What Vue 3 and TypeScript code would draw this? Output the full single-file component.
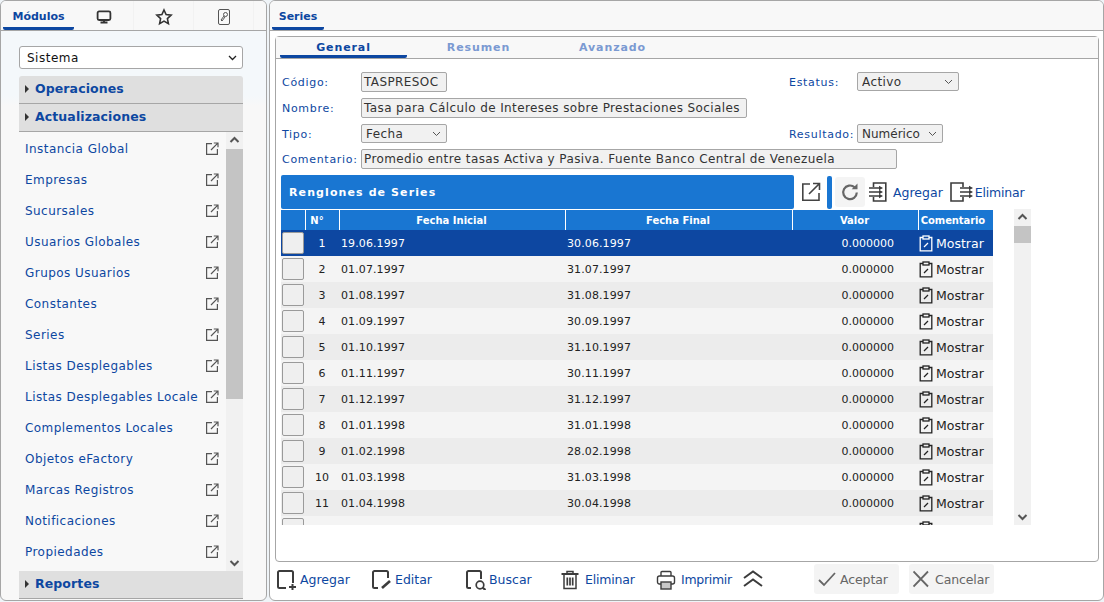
<script setup lang="ts">
const modules = [
  'Instancia Global', 'Empresas', 'Sucursales', 'Usuarios Globales', 'Grupos Usuarios',
  'Constantes', 'Series', 'Listas Desplegables', 'Listas Desplegables Locale',
  'Complementos Locales', 'Objetos eFactory', 'Marcas Registros', 'Notificaciones', 'Propiedades',
]

const rows = [
  ['19.06.1997', '30.06.1997'], ['01.07.1997', '31.07.1997'], ['01.08.1997', '31.08.1997'],
  ['01.09.1997', '30.09.1997'], ['01.10.1997', '31.10.1997'], ['01.11.1997', '30.11.1997'],
  ['01.12.1997', '31.12.1997'], ['01.01.1998', '31.01.1998'], ['01.02.1998', '28.02.1998'],
  ['01.03.1998', '31.03.1998'], ['01.04.1998', '30.04.1998'], ['', ''],
]
</script>

<template>
  <div class="page">
    <aside class="panel left">
      <div class="tabs">
        <div class="tab active">Módulos</div>
        <div class="tab">
          <svg width="16" height="16" viewBox="0 0 16 16" fill="none" stroke="#333" stroke-width="1.800"><rect x="1.600" y="2.400" width="12.800" height="8.600" rx="1.500" /><path d="M4.500 13.500h7M8 11v2" /></svg>
        </div>
        <div class="tab">
          <svg width="18" height="18" viewBox="0 0 18 18" fill="none" stroke="#333" stroke-width="1.600"><path d="M9 2l2.100 4.600 5 .6-3.700 3.400 1 5L9 13.100l-4.400 2.500 1-5L1.900 7.200l5-.6z" /></svg>
        </div>
        <div class="tab">
          <svg width="14" height="18" viewBox="0 0 14 18" fill="none" stroke="#555" stroke-width="1"><rect x="1.500" y="1.500" width="11" height="15" rx="1.500" /><circle cx="8.500" cy="6.500" r="2" /><path d="M7 8l-3 4 1 1 3-4" /></svg>
        </div>
      </div>

      <div class="left-body">
        <div class="sel-wrap module-wrap">
          <select class="sel module-select"><option>Sistema</option></select>
          <svg class="chev" width="9" height="6" viewBox="0 0 9 6" fill="none" stroke="#222" stroke-width="1.300"><path d="M1 1l3.500 3.500L8 1" /></svg>
        </div>
        <div class="group first"><span class="caret"></span>Operaciones</div>
        <div class="group"><span class="caret"></span>Actualizaciones</div>
        <div class="module-list">
          <ul>
            <li v-for="m in modules" :key="m">
              <span class="module-name">{{ m }}</span>
              <svg width="14" height="14" viewBox="0 0 14 14" fill="none" stroke="#555" stroke-width="1.200"><path d="M7 1.600H1.600v10.800h10.800V7M6 8l6.800-6.800M8.800 1h4.200v4.200" /></svg>
            </li>
          </ul>
          <div class="scrollbar">
            <svg class="arrow" width="17" height="17" viewBox="0 0 17 17" fill="none" stroke="#555" stroke-width="2"><path d="M4.500 10l4-4 4 4" /></svg>
            <div class="track"><div class="thumb left-thumb"></div></div>
            <svg class="arrow" width="17" height="17" viewBox="0 0 17 17" fill="none" stroke="#555" stroke-width="2"><path d="M4.500 7l4 4 4-4" /></svg>
          </div>
        </div>
        <div class="group"><span class="caret"></span>Reportes</div>
      </div>
    </aside>

    <main class="panel right">
      <div class="tabs series-tabs">
        <div class="tab active series-tab">Series</div>
      </div>

      <section class="detail">
        <div class="detail-tabs">
          <div class="dtab current">General</div>
          <div class="dtab resumen">Resumen</div>
          <div class="dtab avanzado">Avanzado</div>
        </div>

        <div class="form">
          <label>Código:</label>
          <div class="field w-code">TASPRESOC</div>
          <label class="lbl2">Estatus:</label>
          <div class="sel-wrap w-status">
            <select class="sel"><option>Activo</option></select>
            <svg class="chev" width="9" height="6" viewBox="0 0 9 6" fill="none" stroke="#555" stroke-width="1"><path d="M1 1l3.500 3.500L8 1" /></svg>
          </div>

          <label>Nombre:</label>
          <div class="field w-name wide">Tasa para Cálculo de Intereses sobre Prestaciones Sociales</div>

          <label>Tipo:</label>
          <div class="sel-wrap w-code">
            <select class="sel"><option>Fecha</option></select>
            <svg class="chev" width="9" height="6" viewBox="0 0 9 6" fill="none" stroke="#555" stroke-width="1"><path d="M1 1l3.500 3.500L8 1" /></svg>
          </div>
          <label class="lbl2">Resultado:</label>
          <div class="sel-wrap w-code">
            <select class="sel tight"><option>Numérico</option></select>
            <svg class="chev" width="9" height="6" viewBox="0 0 9 6" fill="none" stroke="#555" stroke-width="1"><path d="M1 1l3.500 3.500L8 1" /></svg>
          </div>

          <label>Comentario:</label>
          <div class="field w-comment wide">Promedio entre tasas Activa y Pasiva. Fuente Banco Central de Venezuela</div>
        </div>

        <div class="grid-head">
          <div class="grid-title">Renglones de Series</div>
          <svg class="open" width="20" height="20" viewBox="0 0 20 20" fill="none" stroke="#444" stroke-width="1.600"><path d="M9 2H1.800v16.200H18V11M8 12L18 2M12 1.500h6.500V8" /></svg>
          <div class="blue-bar"></div>
          <div class="refresh">
            <svg width="20" height="20" viewBox="0 0 20 20" fill="none" stroke="#666" stroke-width="2.200"><path d="M16.800 10.500a6.800 6.800 0 1 1-2.200-5.200" /><path d="M17.500 1.500v5.800h-5.800z" fill="#666" stroke="none" /></svg>
          </div>
          <svg class="tool-ic" width="19" height="20" viewBox="0 0 19 20" fill="none" stroke="#3c3c3c" stroke-width="1.600"><path d="M4.500 5V1h12.300v18H4.500v-4" /><path d="M0 6h11M0 10h11M0 14h11" stroke-width="1.300" /><path d="M10 3.800l4 2.200-4 2.200M10 7.800l4 2.200-4 2.200M10 11.800l4 2.200-4 2.200" fill="#3c3c3c" stroke="none" /></svg>
          <span class="link tool-add">Agregar</span>
          <svg class="del-ic" width="23" height="20" viewBox="0 0 23 20" fill="none" stroke="#3c3c3c" stroke-width="1.600"><path d="M13 5V1H1v18h12v-4" /><path d="M10 6h10M10 10h10M10 14h10" stroke-width="1.300" /><path d="M19 3.800l4 2.200-4 2.200M19 7.800l4 2.200-4 2.200M19 11.800l4 2.200-4 2.200" fill="#3c3c3c" stroke="none" /></svg>
          <span class="link del-text tool-del">Eliminar</span>
        </div>

        <div class="grid-area">
          <div class="table">
            <div class="thead">
              <div class="th c-check"></div>
              <div class="th c-num">N°</div>
              <div class="th c-date">Fecha Inicial</div>
              <div class="th c-date2">Fecha Final</div>
              <div class="th c-val">Valor</div>
              <div class="th c-com">Comentario</div>
            </div>
            <div v-for="(r, i) in rows" :key="i" class="tr" :class="{ selected: i === 0, odd: i % 2 === 0 }">
              <div class="c-check"><span class="box"></span></div>
              <div class="td c-num">{{ r[0] ? i + 1 : '' }}</div>
              <div class="td c-date">{{ r[0] }}</div>
              <div class="td c-date2">{{ r[1] }}</div>
              <div class="td c-val num">{{ r[0] ? '0.000000' : '' }}</div>
              <div class="td c-com">
                <svg width="14" height="17" viewBox="0 0 14 17" fill="none" stroke="currentColor" stroke-width="1.300"><path d="M4 2.500H1.200v13.300h11.600V2.500H10" /><rect x="4" y="1" width="6" height="3" /><path d="M5 12l4-4" /></svg>
                <span class="show">{{ r[0] ? 'Mostrar' : '' }}</span>
              </div>
            </div>
          </div>
          <div class="scrollbar grid-scroll">
            <svg class="arrow" width="17" height="17" viewBox="0 0 17 17" fill="none" stroke="#555" stroke-width="2"><path d="M4.500 10l4-4 4 4" /></svg>
            <div class="track"><div class="thumb grid-thumb"></div></div>
            <svg class="arrow" width="17" height="17" viewBox="0 0 17 17" fill="none" stroke="#555" stroke-width="2"><path d="M4.500 7l4 4 4-4" /></svg>
          </div>
        </div>
      </section>

      <footer class="actions">
        <div class="act a1">
          <svg width="20" height="22" viewBox="0 0 20 22" fill="none" stroke="#3c3c3c" stroke-width="2"><path d="M9 20H2.500A1.500 1.500 0 0 1 1 18.500V4.500A1.500 1.500 0 0 1 2.500 3h12A1.500 1.500 0 0 1 16 4.500V15M15.500 16v6M12 19h7" /></svg>
          <span class="link">Agregar</span>
        </div>
        <div class="act a2">
          <svg width="20" height="22" viewBox="0 0 20 22" fill="none" stroke="#3c3c3c" stroke-width="2"><path d="M6 20H2.500A1.500 1.500 0 0 1 1 18.500V4.500A1.500 1.500 0 0 1 2.500 3h12A1.500 1.500 0 0 1 16 4.500V10" /><path d="M10 20l8-7" stroke-width="2.600" /></svg>
          <span class="link">Editar</span>
        </div>
        <div class="act a3">
          <svg width="20" height="22" viewBox="0 0 20 22" fill="none" stroke="#3c3c3c" stroke-width="2"><path d="M5 20H2.500A1.500 1.500 0 0 1 1 18.500V4.500A1.500 1.500 0 0 1 2.500 3h11A1.500 1.500 0 0 1 15 4.500V11" /><circle cx="14" cy="17" r="3.800" stroke-width="1.700" /><path d="M16.500 19.500l3 2.500" stroke-width="2.200" /></svg>
          <span class="link">Buscar</span>
        </div>
        <div class="act a4">
          <svg width="18" height="22" viewBox="0 0 18 22" fill="none" stroke="#3c3c3c" stroke-width="1.500"><path d="M.5 6h17" stroke-width="2" /><path d="M6 5V3.500h6V5M3 7v13.500h12V7" /><path d="M6.300 9.500v8M9 9.500v8M11.700 9.500v8" stroke-width="1.700" /></svg>
          <span class="link del-text">Eliminar</span>
        </div>
        <div class="act a5">
          <svg width="20" height="22" viewBox="0 0 20 22" fill="none" stroke="#3c3c3c" stroke-width="1.400"><path d="M5 8V4.500a1 1 0 0 1 1-1h8a1 1 0 0 1 1 1V8" /><rect x="1.500" y="8" width="17" height="8" rx="2" /><rect x="5" y="14" width="10" height="7" fill="#c8c8c8" /></svg>
          <span class="link print-text">Imprimir</span>
        </div>
        <svg class="collapse" width="20" height="20" viewBox="0 0 20 20" fill="none" stroke="#3c3c3c" stroke-width="2"><path d="M1 9l9-6.500L19 9M1 17l9-6.500 9 6.500" /></svg>
        <div class="btn b-ok">
          <svg width="18" height="18" viewBox="0 0 18 18" fill="none" stroke="#666" stroke-width="1.800"><path d="M1 10l5 5L17 3" /></svg>
          <span>Aceptar</span>
        </div>
        <div class="btn b-cancel">
          <svg width="18" height="18" viewBox="0 0 18 18" fill="none" stroke="#666" stroke-width="1.800"><path d="M.5 1.500l14.500 15M15 1.500L.5 16.500" /></svg>
          <span>Cancelar</span>
        </div>
      </footer>
    </main>
  </div>
</template>

<style>
html, body {
  margin: 0;
  background: #eff4f8;
}
</style>

<style scoped>
.page {
  display: flex;
  gap: 2px;
  width: 1104px;
  height: 602px;
  overflow: hidden;
  font-family: "DejaVu Sans", Verdana, sans-serif;
  font-size: 12px;
  color: #222;
}

.panel {
  box-sizing: border-box;
  height: 601px;
  border: 1px solid #a6a6a6;
  border-radius: 6px;
  display: flex;
  flex-direction: column;
  overflow: hidden;
}

.left {
  width: 267px;
  background: linear-gradient(#f4f8fb 0, #f4f8fb 95px, #f8f8f8 105px);
}

.right {
  width: 835px;
  background: #fff;
}

.tabs {
  flex: none;
  height: 30px;
  box-sizing: border-box;
  border-bottom: 1px solid #a6a6a6;
  display: flex;
  padding-left: 2px;
  background: #f8f8f8;
}

.tab {
  width: 60px;
  display: flex;
  align-items: center;
  justify-content: center;
  box-sizing: border-box;
  height: 29px;
  padding-top: 3px;
  border-right: 1px solid #f2f2f2;
}

.tab.active {
  width: 71px;
  color: #0d47a1;
  font-size: 11px;
  font-weight: bold;
  border-right: 0;
  border-bottom: 3px solid #0d47a1;
  border-radius: 0 0 2px 2px;
  padding-top: 4px;
}

.tab.series-tab {
  width: 52px;
}

.left-body {
  padding: 15px 23px 1px 18px;
  display: flex;
  flex-direction: column;
  flex: 1;
  min-height: 0;
}

.sel-wrap {
  position: relative;
}

.chev {
  position: absolute;
  right: 6px;
  top: 7px;
  pointer-events: none;
}

.module-wrap {
  flex: none;
  height: 23px;
  margin-bottom: 7px;
}

.module-wrap .chev {
  top: 9px;
}

.sel {
  appearance: none;
  display: block;
  width: 100%;
  box-sizing: border-box;
  height: 19px;
  border: 1px solid #a6a6a6;
  border-radius: 2px;
  background: #f1f1f1;
  font: 12px "DejaVu Sans", Verdana, sans-serif;
  letter-spacing: 0.400px;
  color: #333;
  padding: 0 0 0 4px;
}

.sel.tight {
  letter-spacing: 0;
}

.module-select {
  height: 23px;
  border-radius: 3px;
  background: #fff;
  padding-left: 7px;
  letter-spacing: 0.500px;
  color: #111;
}

.group {
  flex: none;
  height: 28px;
  box-sizing: border-box;
  padding-bottom: 2px;
  background: #dfdfdf;
  border-bottom: 1px solid #a6a6a6;
  display: flex;
  align-items: center;
  color: #0d47a1;
  font-weight: bold;
  font-size: 12.500px;
  letter-spacing: 0.100px;
}

.group.first {
  border-radius: 3px 3px 0 0;
}

.caret {
  width: 0;
  height: 0;
  margin: 0 6px 0 6px;
  border-left: 4px solid #333;
  border-top: 4px solid transparent;
  border-bottom: 4px solid transparent;
}

.module-list {
  flex: 1;
  min-height: 0;
  display: flex;
}

.module-list ul {
  list-style: none;
  margin: 0;
  padding: 1px 0 0;
  flex: 1;
  overflow: hidden;
}

.module-list li {
  height: 31px;
  display: flex;
  align-items: center;
  justify-content: space-between;
  padding: 0 7px 0 6px;
  color: #0d47a1;
  letter-spacing: 0.450px;
  white-space: nowrap;
}

.scrollbar {
  flex: none;
  width: 17px;
  display: flex;
  flex-direction: column;
  background: #f1f1f1;
}

.arrow {
  flex: none;
}

.track {
  flex: 1;
  min-height: 0;
}

.thumb {
  background: #c4c4c4;
}

.left-thumb {
  height: 250px;
}

.series-tabs {
  padding-left: 2px;
}

.detail {
  margin: 5px 4px 0 5px;
  height: 526px;
  box-sizing: border-box;
  border: 1px solid #a6a6a6;
  border-radius: 4px;
  display: flex;
  flex-direction: column;
  flex: none;
}

.detail-tabs {
  height: 22px;
  flex: none;
  box-sizing: border-box;
  border-bottom: 1px solid #a6a6a6;
  background: #f8f8f8;
  display: flex;
  padding-left: 4px;
  font-size: 11px;
  font-weight: bold;
  letter-spacing: 0.900px;
}

.dtab {
  display: flex;
  align-items: center;
  justify-content: center;
  color: #7b9ad2;
  height: 21px;
  box-sizing: border-box;
  text-align: center;
}

.dtab.current {
  width: 127px;
  color: #0d47a1;
  border-bottom: 3px solid #0d47a1;
  border-radius: 0 0 2px 2px;
  padding-top: 2px;
}

.resumen {
  width: 143px;
}

.avanzado {
  width: 125px;
}

.form {
  display: grid;
  grid-template-columns: 79px 428px 68px 1fr;
  grid-template-rows: 26px 26px 25px 26px;
  margin: 13px 5px 0 6px;
  align-items: start;
  font-size: 11px;
}

.form label {
  color: #0d47a1;
  letter-spacing: 0.700px;
  line-height: 21px;
  white-space: nowrap;
}

.wide {
  grid-column: 2 / 5;
}

.field {
  box-sizing: border-box;
  height: 20px;
  line-height: 18px;
  border: 1px solid #a6a6a6;
  border-radius: 2px;
  background: #f1f1f1;
  padding-left: 2px;
  font-size: 12px;
  letter-spacing: 0.400px;
  color: #333;
  white-space: nowrap;
  overflow: hidden;
}

.w-code {
  width: 86px;
}

.w-status {
  width: 102px;
}

.w-name {
  width: 386px;
}

.w-comment {
  width: 536px;
}

.grid-head {
  flex: none;
  margin: 0 0 0 5px;
  height: 34px;
  display: flex;
  align-items: center;
}

.grid-title {
  width: 513px;
  height: 34px;
  box-sizing: border-box;
  background: #1976d2;
  border-radius: 2px;
  color: #fff;
  font-size: 11px;
  font-weight: bold;
  letter-spacing: 1.100px;
  line-height: 36px;
  padding-left: 8px;
}

.open {
  margin-left: 7px;
}

.blue-bar {
  width: 5px;
  height: 33px;
  background: #1976d2;
  border-radius: 2px;
  margin-left: 6px;
}

.refresh {
  width: 30px;
  height: 30px;
  margin-left: 3px;
  background: #f4f4f4;
  border-radius: 3px;
  display: flex;
  align-items: center;
  justify-content: center;
}

.tool-ic {
  margin-left: 4px;
}

.tool-add {
  margin: 0 7px 0 5px;
}

.tool-del {
  margin-left: 2px;
}

.link {
  color: #0d47a1;
  font-size: 12.500px;
  white-space: nowrap;
}

.del-text {
  letter-spacing: -0.200px;
}

.print-text {
  letter-spacing: -0.300px;
}

.grid-area {
  flex: 1;
  min-height: 0;
  display: flex;
  margin: 0 0 36px 5px;
}

.table {
  width: 712px;
  overflow: hidden;
  padding-top: 1px;
}

.thead {
  display: flex;
  height: 20px;
  background: #1976d2;
}

.th {
  box-sizing: border-box;
  color: #fff;
  font-size: 10px;
  font-weight: bold;
  line-height: 21px;
  text-align: center;
  border-left: 1px solid #fff;
  padding-right: 2px;
}

.th.c-num {
  padding-right: 11px;
}

.th.c-com {
  width: 75px;
  letter-spacing: -0.100px;
  padding-right: 6px;
}

.thead .c-check {
  width: 24px;
  border-left: 0;
  padding: 0;
}

.c-check {
  width: 25px;
  flex: none;
}

.c-num {
  width: 34px;
  flex: none;
}

.c-date {
  width: 226px;
  flex: none;
}

.c-date2 {
  width: 227px;
  flex: none;
}

.c-val {
  width: 126px;
  flex: none;
}

.c-com {
  width: 74px;
  flex: none;
}

.tr {
  display: flex;
  height: 26px;
  background: #f4f4f4;
  color: #222;
  align-items: center;
  font-size: 11px;
  letter-spacing: 0.100px;
}

.tr.odd {
  background: #ececec;
}

.tr.selected {
  background: #0d47a1;
  color: #fff;
}

.box {
  display: block;
  box-sizing: border-box;
  width: 22px;
  height: 22px;
  margin-left: 1px;
  border: 1px solid #9a9a9a;
  border-radius: 2px;
  background: #efefef;
}

.td {
  box-sizing: border-box;
  padding: 1px 0 0 1px;
}

.tr .c-num {
  text-align: center;
  padding: 1px 2px 0 0;
}

.tr .num {
  text-align: right;
  padding: 1px 25px 0 0;
  letter-spacing: 0;
}

.td.c-com {
  display: flex;
  align-items: center;
  gap: 3px;
  padding: 0;
}

.show {
  font-size: 12.500px;
  letter-spacing: 0;
}

.grid-scroll {
  margin-left: 21px;
}

.grid-thumb {
  height: 17px;
}

.actions {
  flex: none;
  height: 34px;
  display: flex;
  align-items: center;
}

.act {
  display: flex;
  align-items: center;
  gap: 3px;
}

.a1 {
  margin-left: 7px;
  width: 95px;
}

.a2 {
  width: 94px;
}

.a3 {
  width: 95px;
}

.a4 {
  width: 95px;
  gap: 6px;
}

.a5 {
  width: 87px;
  gap: 5px;
}

.collapse {
  margin-right: 51px;
}

.btn {
  display: flex;
  align-items: center;
  gap: 4px;
  height: 30px;
  width: 85px;
  box-sizing: border-box;
  padding-left: 4px;
  background: #f4f4f4;
  border-radius: 3px;
  color: #666;
  font-size: 12.500px;
  letter-spacing: -0.100px;
}

.b-ok {
  margin-right: 10px;
}
</style>
